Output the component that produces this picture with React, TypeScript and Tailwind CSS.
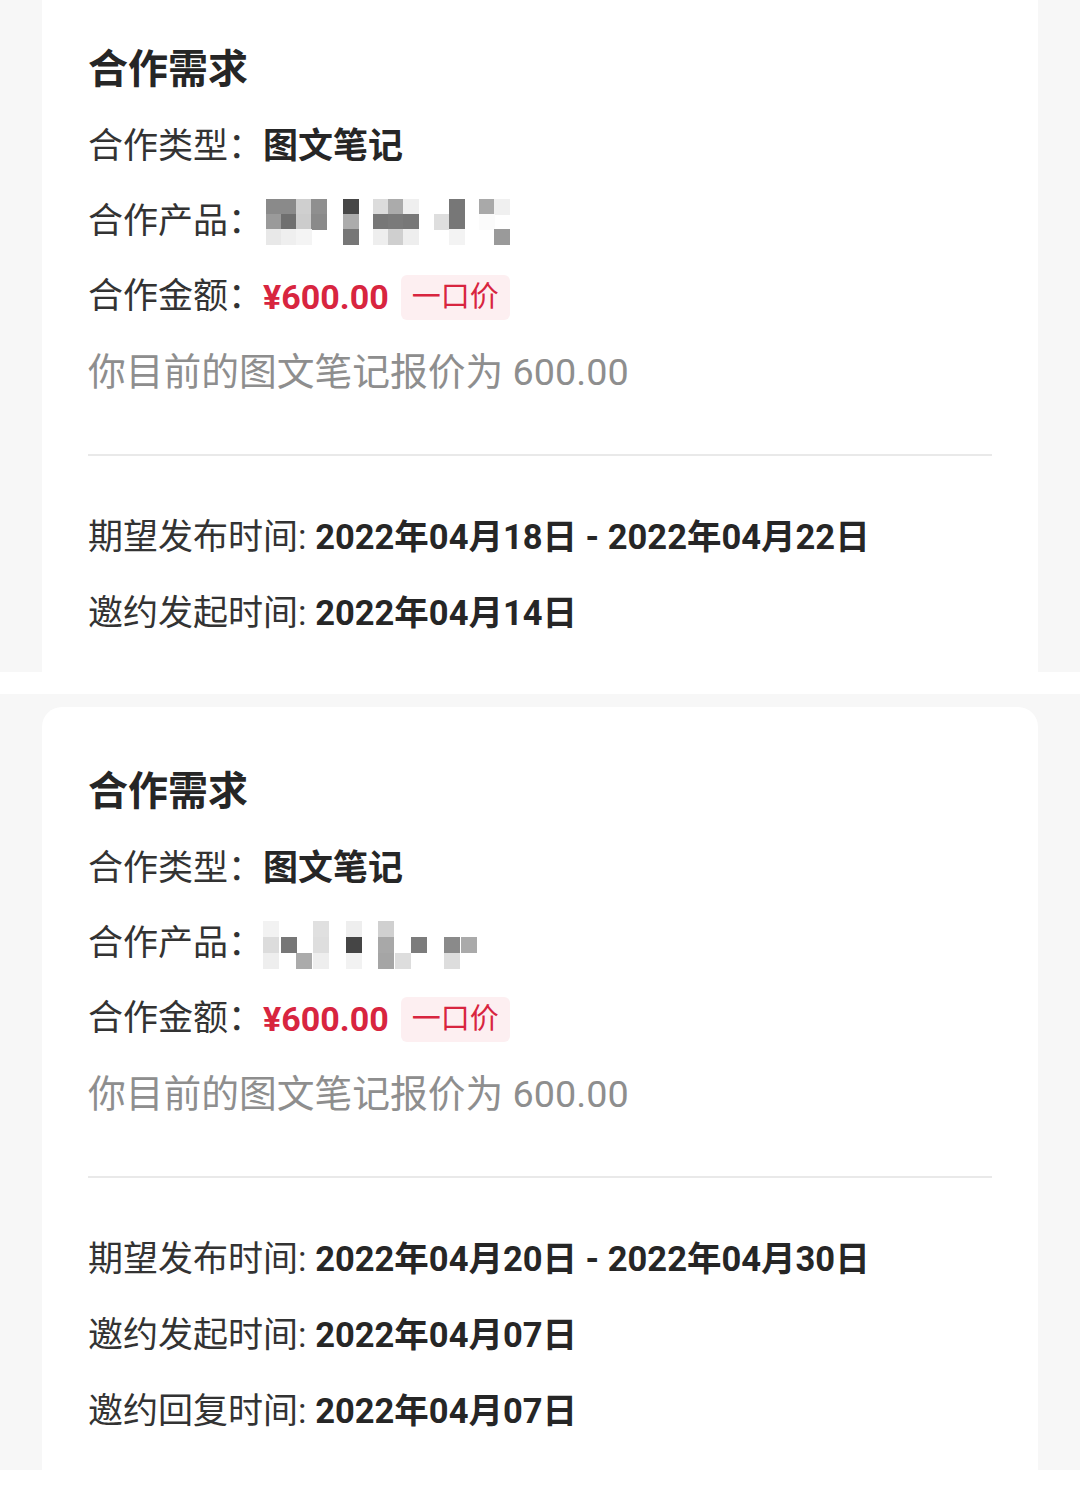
type Cell = [number, number, string]

interface Order {
  topPad: string
  rounded: boolean
  mosaic: Cell[]
  mosaicWidth: number
  dates: { label: string; value: string }[]
}

const mosaicA: Cell[] = [
  [3, 0, '#8a8a8a'], [18, 0, '#8a8a8a'], [33, 0, '#cfcfcf'], [48, 0, '#8f8f8f'], [80, 0, '#474747'],
  [110, 0, '#dcdcdc'], [125, 0, '#ababab'], [140, 0, '#efefef'], [186, 0, '#777777'], [216, 0, '#a9a9a9'], [231, 0, '#f0f0f0'],
  [3, 15, '#9a9a9a'], [18, 15, '#6f6f6f'], [33, 15, '#cccccc'], [48, 15, '#8a8a8a'], [80, 15, '#acacac'],
  [110, 15, '#777777'], [125, 15, '#7a7a7a'], [140, 15, '#777777'], [171, 15, '#dedede'], [186, 15, '#777777'], [216, 15, '#fbfbfb'],
  [3, 30, '#e8e8e8'], [18, 30, '#efefef'], [33, 30, '#f4f4f4'], [80, 30, '#777777'], [110, 30, '#eeeeee'],
  [125, 30, '#cfcfcf'], [140, 30, '#eeeeee'], [186, 30, '#f3f3f3'], [231, 30, '#9a9a9a'],
]

const mosaicB: Cell[] = [
  [0, 0, '#f2f2f2'], [50, 0, '#e0e0e0'], [83, 0, '#eeeeee'], [115, 0, '#d0d0d0'],
  [0, 16, '#dcdcdc'], [18, 16, '#777777'], [50, 16, '#dedede'], [83, 16, '#454545'], [115, 16, '#a8a8a8'],
  [148, 16, '#7c7c7c'], [181, 16, '#8a8a8a'], [198, 16, '#aaaaaa'],
  [0, 32, '#eeeeee'], [33, 32, '#ababab'], [50, 32, '#eeeeee'], [83, 32, '#f2f2f2'], [115, 32, '#a5a5a5'],
  [132, 32, '#dddddd'], [181, 32, '#dddddd'],
]

const orders: Order[] = [
  {
    topPad: 'pt-[30px]',
    rounded: false,
    mosaic: mosaicA,
    mosaicWidth: 250,
    dates: [
      { label: '期望发布时间', value: '2022年04月18日 - 2022年04月22日' },
      { label: '邀约发起时间', value: '2022年04月14日' },
    ],
  },
  {
    topPad: 'pt-[45px]',
    rounded: true,
    mosaic: mosaicB,
    mosaicWidth: 216,
    dates: [
      { label: '期望发布时间', value: '2022年04月20日 - 2022年04月30日' },
      { label: '邀约发起时间', value: '2022年04月07日' },
      { label: '邀约回复时间', value: '2022年04月07日' },
    ],
  },
]

function Mosaic({ cells, width }: { cells: Cell[]; width: number }) {
  return (
    <svg width={width} height={48} viewBox={`0 0 ${width} 48`} className="block">
      {cells.map(([x, y, c], i) => (
        <rect key={i} x={x} y={y} width={16} height={16} fill={c} />
      ))}
    </svg>
  )
}

function OrderCard({ order }: { order: Order }) {
  return (
    <div className={`bg-white px-[46px] pb-[20px] ${order.topPad} ${order.rounded ? 'rounded-t-[20px]' : ''}`}>
      <div className="h-[80px] leading-[80px] text-[40px] font-bold text-[#262626]">合作需求</div>

      <div className="flex h-[75px] items-center text-[35px] text-[#333]">
        <span>合作类型：</span>
        <span className="font-bold text-[#262626]">图文笔记</span>
      </div>

      <div className="flex h-[75px] items-center text-[35px] text-[#333]">
        <span>合作产品：</span>
        <Mosaic cells={order.mosaic} width={order.mosaicWidth} />
      </div>

      <div className="flex h-[75px] items-center text-[35px] text-[#333]">
        <span>合作金额：</span>
        <span className="text-[34px] font-bold text-[#d8253f]">¥600.00</span>
        <span className="ml-[12px] flex h-[45px] items-center rounded-[6px] bg-[#fdeff1] px-[11px] text-[29px] text-[#d8253f]">
          一口价
        </span>
      </div>

      <div className="flex h-[75px] items-center text-[37.75px] text-[#8e8e8e]">你目前的图文笔记报价为 600.00</div>

      <div className="mt-[44px] h-[2px] bg-[#e9e9e9]" />

      <div className="pt-[44px]">
        {order.dates.map((d) => (
          <div key={d.label} className="flex h-[76px] items-center text-[35px] text-[#333]">
            <span>{d.label}:&nbsp;</span>
            <span className="text-[34.5px] font-bold text-[#262626]">{d.value}</span>
          </div>
        ))}
      </div>
    </div>
  )
}

export default function App() {
  return (
    <div
      className="w-[1080px] bg-white"
      style={{ fontFamily: 'Roboto, "Noto Sans CJK SC", sans-serif' }}
    >
      <div className="bg-[#f7f7f7] px-[42px]">
        <OrderCard order={orders[0]} />
      </div>
      <div className="h-[22px]" />
      <div className="bg-[#f7f7f7] px-[42px] pt-[13px]">
        <OrderCard order={orders[1]} />
      </div>
      <div className="h-[22px]" />
    </div>
  )
}
